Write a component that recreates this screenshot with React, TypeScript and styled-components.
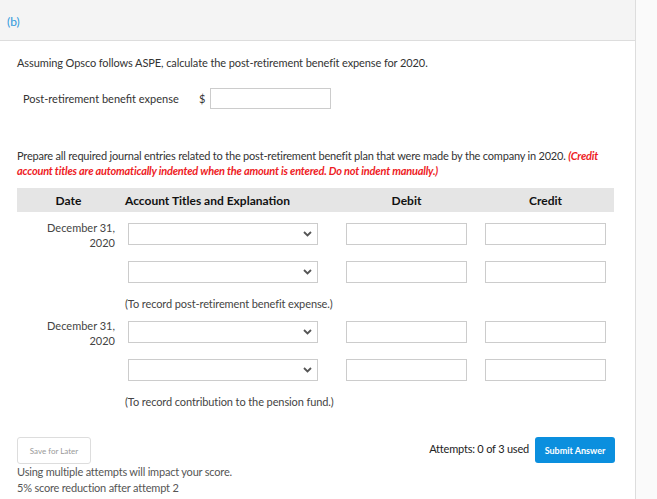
import styled, { createGlobalStyle } from 'styled-components';

const GlobalStyle = createGlobalStyle`
  html, body {
    margin: 0;
    padding: 0;
    background: #fafafa;
  }
  body {
    font-family: Lato, "Open Sans", sans-serif;
    color: #333;
  }
`;

type Entry = {
  date: string;
  lines: number;
  note: string;
};

const entries: Entry[] = [
  { date: 'December 31,\n2020', lines: 2, note: '(To record post-retirement benefit expense.)' },
  { date: 'December 31,\n2020', lines: 2, note: '(To record contribution to the pension fund.)' },
];

function Chevron() {
  return (
    <svg width="9" height="6" viewBox="0 0 9 6">
      <path d="M1 1 L4.5 4.5 L8 1" fill="none" stroke="#555" strokeWidth="1.8" />
    </svg>
  );
}

function App() {
  return (
    <>
      <GlobalStyle />
      <Page>
        <Main>
          <PartHeader>
            <PartLabel>(b)</PartLabel>
          </PartHeader>
          <Body>
            <Question>
              Assuming Opsco follows ASPE, calculate the post-retirement benefit expense for 2020.
            </Question>
            <AmountRow>
              <AmountLabel>Post-retirement benefit expense</AmountLabel>
              <Dollar>$</Dollar>
              <AmountInput />
            </AmountRow>
            <Question $wide>
              Prepare all required journal entries related to the post-retirement benefit plan that were made by the company in 2020.{' '}
              <Warning>
                (Credit account titles are automatically indented when the amount is entered. Do not indent manually.)
              </Warning>
            </Question>
            <Journal>
              <HeadRow>
                <HeadCell $align="center">Date</HeadCell>
                <HeadCell $align="left">Account Titles and Explanation</HeadCell>
                <HeadCell $align="center">Debit</HeadCell>
                <HeadCell $align="center">Credit</HeadCell>
              </HeadRow>
              {entries.map((entry, i) => (
                <EntryGroup key={i}>
                  {Array.from({ length: entry.lines }).map((_, j) => (
                    <EntryRow key={j}>
                      <DateCell>{j === 0 ? entry.date : ''}</DateCell>
                      <AccountCell>
                        <Select>
                          <Chevron />
                        </Select>
                      </AccountCell>
                      <div>
                        <CellInput />
                      </div>
                      <div>
                        <CellInput />
                      </div>
                    </EntryRow>
                  ))}
                  <NoteRow>
                    <span />
                    <Note>{entry.note}</Note>
                  </NoteRow>
                </EntryGroup>
              ))}
            </Journal>
            <Footer>
              <FooterLeft>
                <SaveButton>Save for Later</SaveButton>
                <Hint>
                  Using multiple attempts will impact your score.
                  <br />
                  5% score reduction after attempt 2
                </Hint>
              </FooterLeft>
              <FooterRight>
                <Attempts>Attempts: 0 of 3 used</Attempts>
                <SubmitButton>Submit Answer</SubmitButton>
              </FooterRight>
            </Footer>
          </Body>
        </Main>
      </Page>
    </>
  );
}

const Page = styled.div`
  display: flex;
  width: 657px;
  height: 499px;
  overflow: hidden;
`;

const Main = styled.div`
  width: 635px;
  flex-shrink: 0;
  background: #fff;
  border-right: 1px solid #ddd;
  display: flex;
  flex-direction: column;
`;

const PartHeader = styled.div`
  flex-shrink: 0;
  height: 41px;
  background: #f4f4f4;
  border-bottom: 1px solid #ddd;
  padding: 10px 0 0 7px;
  box-sizing: border-box;
`;

const PartLabel = styled.span`
  font-size: 12px;
  color: #2f98dc;
`;

const Body = styled.div`
  flex-shrink: 0;
  padding: 14px 0 0 17px;
`;

const Question = styled.p<{ $wide?: boolean }>`
  margin: 0;
  font-size: 11px;
  line-height: ${p => (p.$wide ? '15px' : '16px')};
  color: #333;
  letter-spacing: ${p => (p.$wide ? '-0.2px' : '-0.1px')};
  width: ${p => (p.$wide ? '600px' : 'auto')};
`;

const Warning = styled.em`
  color: #ee1c25;
  font-weight: 700;
`;

const AmountRow = styled.div`
  display: flex;
  align-items: center;
  margin: 17px 0 39px 6px;
`;

const AmountLabel = styled.span`
  font-size: 11px;
  width: 176px;
`;

const Dollar = styled.span`
  font-size: 11px;
  width: 11px;
`;

const AmountInput = styled.div`
  width: 119px;
  height: 19px;
  border: 1px solid #ccc;
  background: #fff;
`;

const Journal = styled.div`
  width: 597px;
  margin-top: 10px;
`;

const columns = '103px 226px 139px 129px';

const HeadRow = styled.div`
  display: grid;
  grid-template-columns: ${columns};
  height: 24px;
  align-items: center;
  background: #e5e5e5;
`;

const HeadCell = styled.div<{ $align: 'left' | 'center' }>`
  font-size: 12px;
  font-weight: 700;
  color: #111;
  text-align: ${p => p.$align};
  padding-left: ${p => (p.$align === 'left' ? '5px' : '0')};

  &:nth-child(3),
  &:nth-child(4) {
    width: 121px;
  }
`;

const EntryGroup = styled.div`
  padding-top: 11px;
`;

const EntryRow = styled.div`
  display: grid;
  grid-template-columns: ${columns};
  height: 22px;
  margin-bottom: 16px;
`;

const DateCell = styled.div`
  font-size: 11px;
  line-height: 15px;
  color: #444;
  text-align: right;
  padding-right: 5px;
  white-space: pre-line;
  margin-top: -3px;
`;

const AccountCell = styled.div`
  padding-left: 8px;
`;

const Select = styled.div`
  width: 183px;
  height: 20px;
  border: 1px solid #ccc;
  background: #fff;
  display: flex;
  align-items: center;
  justify-content: flex-end;
  padding-right: 5px;
`;

const CellInput = styled.div`
  width: 119px;
  height: 20px;
  border: 1px solid #ccc;
  background: #fff;
`;

const NoteRow = styled.div`
  display: grid;
  grid-template-columns: 103px 1fr;
  margin-top: -2px;
  margin-bottom: -1px;
`;

const Note = styled.div`
  font-size: 11px;
  line-height: 14px;
  color: #444;
  letter-spacing: -0.1px;
  padding-left: 5px;
`;

const Footer = styled.div`
  display: flex;
  justify-content: space-between;
  align-items: flex-start;
  width: 598px;
  margin-top: 29px;
`;

const FooterLeft = styled.div`
  display: flex;
  flex-direction: column;
`;

const SaveButton = styled.button`
  width: 74px;
  height: 27px;
  border: 1px solid #ddd;
  border-radius: 3px;
  background: #fff;
  color: #999;
  font-family: Lato, sans-serif;
  font-size: 8px;
  padding: 0;
`;

const Hint = styled.div`
  font-size: 11px;
  line-height: 16px;
  color: #555;
  letter-spacing: -0.2px;
`;

const FooterRight = styled.div`
  display: flex;
  align-items: center;
  gap: 6px;
`;

const Attempts = styled.span`
  font-size: 11px;
  color: #222;
  letter-spacing: -0.2px;
  margin-top: -3px;
`;

const SubmitButton = styled.button`
  width: 80px;
  height: 26px;
  border: none;
  border-radius: 3px;
  background: #0b8fde;
  color: #fff;
  font-family: Lato, sans-serif;
  font-weight: 700;
  font-size: 9px;
  padding: 0;
`;

export default App;
